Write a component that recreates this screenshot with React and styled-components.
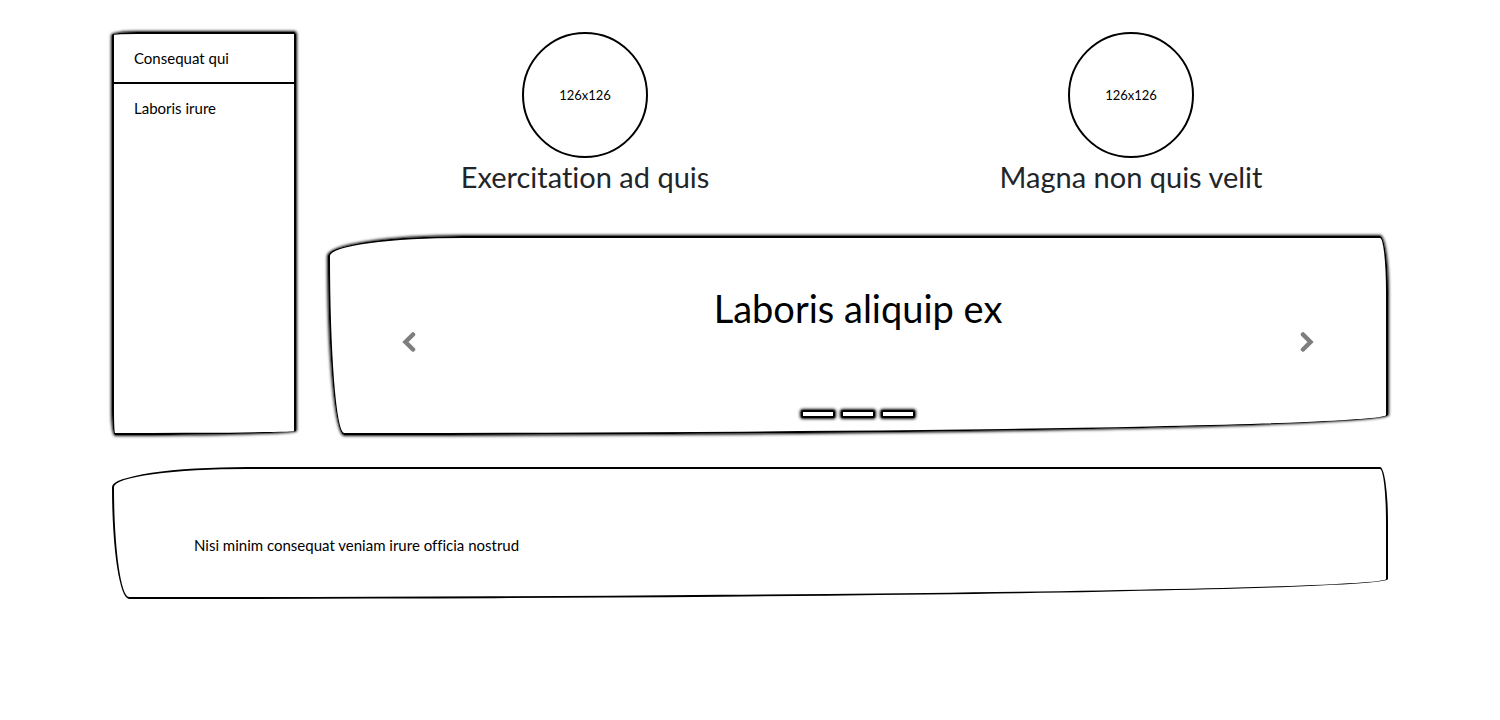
import React, { useState } from "react";
import styled, { createGlobalStyle } from "styled-components";

const GlobalStyle = createGlobalStyle`
  *, *::before, *::after { box-sizing: border-box; }
  body {
    margin: 0;
    background: #fff;
    color: #000;
    font: 15px/24px Lato, "Open Sans", sans-serif;
    font-variant-ligatures: none;
  }
  h1, h2, p, ul { margin: 0; padding: 0; font-weight: 400; }
`;

const Page = styled.div`
  display: flex;
  flex-direction: column;
  gap: 32px;
  padding: 32px 112px;
`;

const Columns = styled.div`
  display: flex;
  gap: 32px;
`;

const Sidebar = styled.nav`
  flex: 0 0 184px;
  border: 2px solid #000;
  border-radius: 25px 2px 179px 3px / 3px 3px 4px 25px;
  box-shadow: 0 0 3px 1px #000;
`;

const NavList = styled.ul`
  list-style: none;
`;

const NavItem = styled.li`
  & + & { border-top: 2px solid #000; }
`;

const NavLink = styled.a`
  display: block;
  padding: 12px 20px;
  color: inherit;
  text-decoration: none;
`;

const Main = styled.main`
  flex: 1;
  min-width: 0;
  display: flex;
  flex-direction: column;
  gap: 40px;
`;

const Features = styled.div`
  display: grid;
  grid-template-columns: 1fr 1fr;
  gap: 32px;
`;

const Feature = styled.section`
  display: flex;
  flex-direction: column;
  align-items: center;
`;

const Avatar = styled.div`
  display: grid;
  place-items: center;
  width: 126px;
  height: 126px;
  border: 2px solid #000;
  border-radius: 50%;
  font-size: 13px;
`;

const FeatureTitle = styled.h2`
  color: #212529;
  font-size: 29px;
  line-height: 38px;
  text-align: center;
`;

const Carousel = styled.section`
  display: grid;
  grid-template-columns: 15% 1fr 15%;
  min-height: 199px;
  border: 2px solid #000;
  border-radius: 135px 8px 1044px 16px / 20px 56px 20px 179px;
  box-shadow: 0 0 3px 1px #000;
`;

const Slide = styled.div`
  display: flex;
  flex-direction: column;
  align-items: center;
  justify-content: space-between;
  padding: 46px 0 15px;
`;

const SlideTitle = styled.h1`
  font-size: 38px;
  line-height: 48px;
`;

const Control = styled.button`
  display: grid;
  place-items: center;
  padding: 12px 0 0;
  border: 0;
  background: none;
  color: #000;
  opacity: 0.5;
  cursor: pointer;
`;

const Indicators = styled.div`
  display: flex;
  gap: 6px;
`;

const Indicator = styled.button`
  width: 34px;
  height: 8px;
  padding: 0;
  border: 2px solid #000;
  border-radius: 2px;
  background: #fff;
  box-shadow: 0 0 3px 1px #000;
  cursor: pointer;
`;

const Footer = styled.footer`
  padding: 64px 80px 40px;
  border: 2px solid #000;
  border-radius: 135px 8px 1259px 17px / 20px 56px 20px 112px;
`;

const chevrons = {
  left: "M5.6 1L2.6 4L5.6 7",
  right: "M2.4 1L5.4 4L2.4 7",
};

function Chevron({ side }) {
  return (
    <svg
      width="20"
      height="20"
      viewBox="0 0 8 8"
      fill="none"
      stroke="currentColor"
      strokeWidth="1.8"
      strokeLinecap="round"
      aria-hidden="true"
    >
      <path d={chevrons[side]} />
    </svg>
  );
}

const links = ["Consequat qui", "Laboris irure"];
const features = ["Exercitation ad quis", "Magna non quis velit"];
const slides = [0, 1, 2];

export default function App() {
  const [slide, setSlide] = useState(0);
  const move = (step) => setSlide((slide + step + slides.length) % slides.length);

  return (
    <>
      <GlobalStyle />
      <Page>
        <Columns>
          <Sidebar>
            <NavList>
              {links.map((label) => (
                <NavItem key={label}>
                  <NavLink href="#">{label}</NavLink>
                </NavItem>
              ))}
            </NavList>
          </Sidebar>
          <Main>
            <Features>
              {features.map((title) => (
                <Feature key={title}>
                  <Avatar>126x126</Avatar>
                  <FeatureTitle>{title}</FeatureTitle>
                </Feature>
              ))}
            </Features>
            <Carousel>
              <Control type="button" aria-label="Previous" onClick={() => move(-1)}>
                <Chevron side="left" />
              </Control>
              <Slide>
                <SlideTitle>Laboris aliquip ex</SlideTitle>
                <Indicators>
                  {slides.map((n) => (
                    <Indicator
                      key={n}
                      type="button"
                      aria-label={`Slide ${n + 1}`}
                      aria-current={n === slide}
                      onClick={() => setSlide(n)}
                    />
                  ))}
                </Indicators>
              </Slide>
              <Control type="button" aria-label="Next" onClick={() => move(1)}>
                <Chevron side="right" />
              </Control>
            </Carousel>
          </Main>
        </Columns>
        <Footer>
          <p>Nisi minim consequat veniam irure officia nostrud</p>
        </Footer>
      </Page>
    </>
  );
}
